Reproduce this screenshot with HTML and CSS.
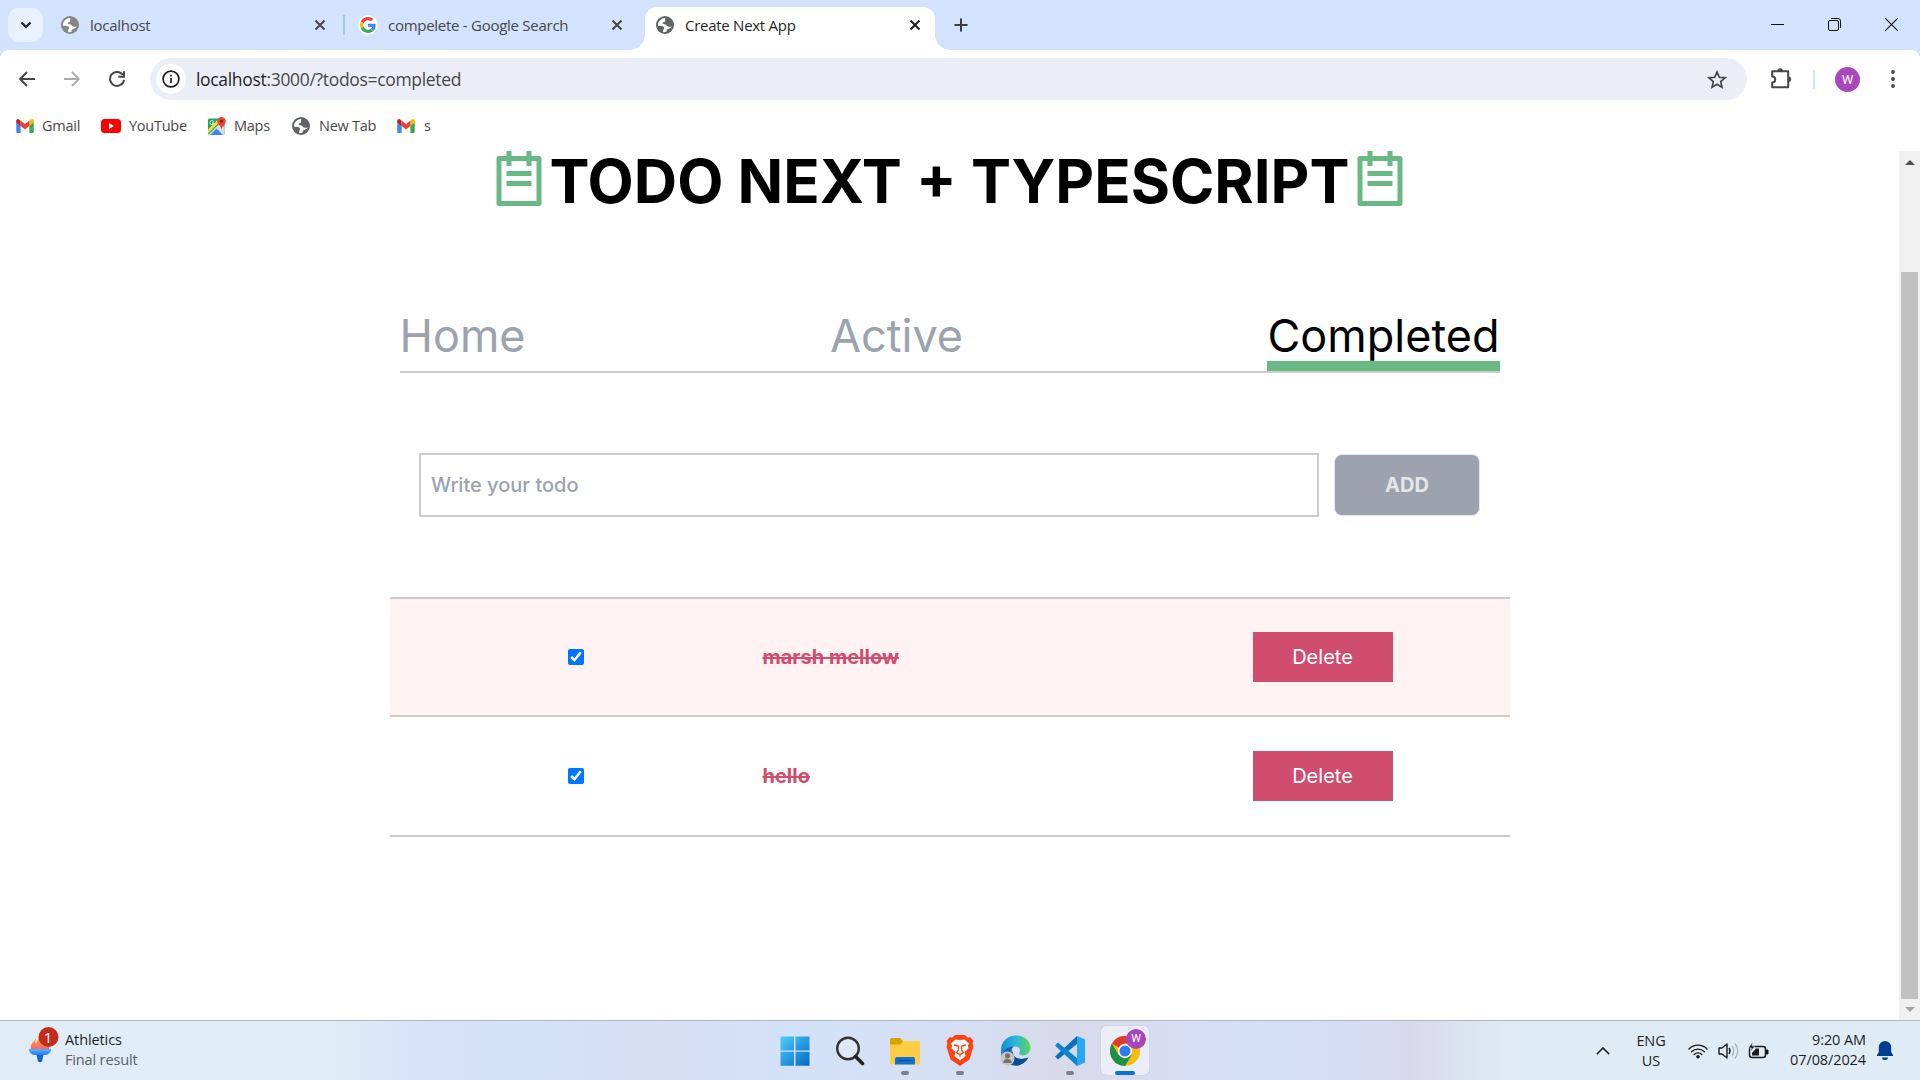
FILE: index.html
```html
<!DOCTYPE html>
<html lang="en">
<head>
<meta charset="utf-8">
<title>Create Next App</title>
<link rel="stylesheet" href="styles.css">
</head>
<body>
<svg width="0" height="0" class="defs">
  <defs>
    <symbol id="globe" viewBox="0 0 18 18"><circle cx="9" cy="9" r="9"/><path fill="#fff" d="M9.2 2c-2.6.2-5 1.4-6.4 3.8-.8 1.500-.9 2.800-.6 4.200 2-.4 3.400-.2 4.600.3 1.300.6 1.500 1.600 1.100 2.400-.4.800-1 1.300-.8 3.400 1.100.1 2.300 0 3.500-.5-.4-1.600.7-2.300 1.700-2.700 1.300-.5 3.100-1 3.600-2.700-1.100.7-2.600.8-3.900.2-1.400-.6-1.300-1.700-2.500-2C8.200 8 6.600 8.200 6.700 7.200c.1-1.100 1.700-.8 2.300-1.700.5-.8-.3-1.300 0-2.100.1-.6.5-1 .2-1.400z"/></symbol>
    <symbol id="close" viewBox="0 0 12 12"><path d="M1.500 1.500l9 9m0-9l-9 9" fill="none" stroke="currentColor" stroke-width="2"/></symbol>
    <symbol id="gmail" viewBox="0 0 20 16"><path fill="#4285f4" d="M0 2v12.500C0 15.300.7 16 1.500 16H5V6z"/><path fill="#34a853" d="M15 6v10h3.500c.8 0 1.500-.7 1.500-1.500V2z"/><path fill="#fbbc04" d="M15 2v6l5-4V2.300C20 .3 17.800-.7 16.300.8z"/><path fill="#c5221f" d="M0 2.300V4l5 4V2L3.700.8C2.200-.7 0 .3 0 2.300z"/><path fill="#ea4335" d="M5 8V1.700l5 4 5-4V8l-5 4z"/></symbol>
    <symbol id="todo" viewBox="0 0 24 24"><path d="M17 2h3a1 1 0 0 1 1 1v18a1 1 0 0 1-1 1H4a1 1 0 0 1-1-1V3a1 1 0 0 1 1-1h3V0h2v2h6V0h2v2zm0 2v2h-2V4H9v2H7V4H5v16h14V4h-2zM7 8h10v2H7V8zm0 4h10v2H7v-2z"/></symbol>
  </defs>
</svg>

<header class="tabstrip">
  <button class="tab-search"><svg width="12" height="8" viewBox="0 0 12 8"><path d="M1.500 1.500L6 6l4.500-4.500" fill="none" stroke="#1f1f1f" stroke-width="2.200"/></svg></button>
  <div class="tab tab-first"><svg class="fav gray" width="18" height="18"><use href="#globe"/></svg><span>localhost</span><svg class="x" width="12" height="12"><use href="#close"/></svg></div>
  <i class="tab-divider"></i>
  <div class="tab tab-second"><b class="g-disc"><svg width="16" height="16" viewBox="0 0 48 48"><path fill="#EA4335" d="M24 9.500c3.540 0 6.710 1.220 9.210 3.600l6.850-6.850C35.900 2.380 30.470 0 24 0 14.620 0 6.510 5.380 2.560 13.220l7.980 6.190C12.430 13.720 17.740 9.500 24 9.500z"/><path fill="#4285F4" d="M46.980 24.550c0-1.570-.15-3.090-.38-4.550H24v9.020h12.940c-.58 2.960-2.260 5.480-4.780 7.180l7.730 6c4.510-4.180 7.090-10.360 7.090-17.650z"/><path fill="#FBBC05" d="M10.530 28.590a14.500 14.500 0 0 1 0-9.180l-7.980-6.190a24 24 0 0 0 0 21.560z"/><path fill="#34A853" d="M24 48c6.480 0 11.930-2.130 15.890-5.810l-7.730-6c-2.150 1.450-4.920 2.300-8.160 2.300-6.260 0-11.570-4.220-13.470-9.910l-7.980 6.190C6.510 42.620 14.620 48 24 48z"/></svg></b><span>compelete - Google Search</span><svg class="x" width="12" height="12"><use href="#close"/></svg></div>
  <div class="tab tab-active"><svg class="fav" width="18" height="18"><use href="#globe"/></svg><span>Create Next App</span><svg class="x" width="12" height="12"><use href="#close"/></svg></div>
  <button class="new-tab"><svg width="14" height="14" viewBox="0 0 14 14"><path d="M7 .5v13M.5 7h13" stroke="#3c3c3c" stroke-width="2"/></svg></button>
  <div class="window-controls">
    <svg width="13" height="13" viewBox="0 0 13 13"><path d="M0 6.500h13" stroke="#111"/></svg>
    <svg width="13" height="13" viewBox="0 0 13 13"><rect x=".5" y="2.500" width="10" height="10" rx="1.500" fill="none" stroke="#111"/><path d="M3 .5h7a2.500 2.500 0 0 1 2.500 2.500v7" fill="none" stroke="#111"/></svg>
    <svg width="13" height="13" viewBox="0 0 13 13"><path d="M.2.200l12.600 12.600m0-12.600L.2 12.800" stroke="#111" stroke-width="1.100"/></svg>
  </div>
</header>

<nav class="toolbar">
  <div class="nav-buttons">
    <svg width="16" height="16" viewBox="0 0 16 16"><path d="M16 8H1.500M8 1L1.200 8 8 15" fill="none" stroke="#474747" stroke-width="2"/></svg>
    <svg width="16" height="16" viewBox="0 0 16 16"><path d="M0 8h14.500M8 1l6.800 7L8 15" fill="none" stroke="#aaa" stroke-width="1.800"/></svg>
    <svg width="16" height="16" viewBox="0 0 16 16"><path d="M13.800 3.900A7 7 0 1 0 15 8.800M15 .3v5.500H9.300" fill="none" stroke="#474747" stroke-width="2"/></svg>
  </div>
  <div class="omnibox">
    <b class="site-info"><svg width="18" height="18" viewBox="0 0 18 18"><circle cx="9" cy="9" r="7.900" fill="none" stroke="#1f1f1f" stroke-width="1.700"/><path d="M9 8v5M9 4.700v1.800" stroke="#1f1f1f" stroke-width="1.700"/></svg></b>
    <span class="url"><em>localhost</em>:3000/?todos=completed</span>
    <svg class="star" width="20" height="19" viewBox="0 0 20 19"><path d="M10 2l2.300 5.300 5.700.5-4.300 3.800 1.300 5.600-5-3-5 3 1.300-5.600L2 7.800l5.700-.5z" fill="none" stroke="#474747" stroke-width="1.700"/></svg>
  </div>
  <svg class="puzzle" width="22" height="22" viewBox="0 0 22 22"><path d="M2.200 3.200h16v16h-16v-4.600a3 3 0 0 0 0-6z" fill="none" stroke="#474747" stroke-width="2" stroke-linejoin="round"/><path d="M7.500 3a2.700 2.700 0 0 1 5.400 0zM18.500 8.500a2.700 2.700 0 0 1 0 5.400z" fill="#474747"/></svg>
  <i class="toolbar-divider"></i>
  <b class="avatar">W</b>
  <svg class="kebab" width="4" height="18" viewBox="0 0 4 18"><g fill="#474747"><circle cx="2" cy="2" r="1.900"/><circle cx="2" cy="9" r="1.900"/><circle cx="2" cy="16" r="1.900"/></g></svg>
</nav>

<div class="bookmarks">
  <a class="bm bm-gmail"><svg width="18" height="14"><use href="#gmail"/></svg><span>Gmail</span></a>
  <a class="bm bm-youtube"><svg width="20" height="14" viewBox="0 0 20 14"><rect width="20" height="14" rx="3.500" fill="#f00"/><path d="M8 4l5 3-5 3z" fill="#fff"/></svg><span>YouTube</span></a>
  <a class="bm bm-maps"><svg width="18" height="18" viewBox="0 0 18 18"><clipPath id="mapclip"><rect y="1.500" width="16.500" height="16.500" rx="1.500"/></clipPath><g clip-path="url(#mapclip)"><path d="M0 0h18v18H0z" fill="#1fa463"/><path d="M0 18L12 6l6 6v6z" fill="#dcdcdc"/><path d="M2 18l6.500-6.500L15 18z" fill="#4285f4"/><path d="M-1 15.500L12 2.500" stroke="#fdd835" stroke-width="3"/></g><path d="M13.500.0a4.300 4.300 0 0 1 4.300 4.300c0 3-3.300 4.200-4.300 8-1-3.800-4.300-5-4.300-8A4.300 4.300 0 0 1 13.500 0z" fill="#ea4335"/><circle cx="13.500" cy="4.300" r="1.500" fill="#7b231e"/><path d="M5.600 4.500a2 2 0 1 0 .3 1.500H4" fill="none" stroke="#fff" stroke-width=".9"/></svg><span>Maps</span></a>
  <a class="bm bm-new"><svg class="fav" width="18" height="18"><use href="#globe"/></svg><span>New Tab</span></a>
  <a class="bm bm-s"><svg width="18" height="14"><use href="#gmail"/></svg><span>s</span></a>
</div>

<div class="viewport">
  <main class="page">
    <h1 class="title"><svg width="60" height="60"><use href="#todo"/></svg><span>TODO NEXT + TYPESCRIPT</span><svg width="60" height="60"><use href="#todo"/></svg></h1>
    <nav class="filters"><a>Home</a><a>Active</a><a class="current">Completed</a></nav>
    <form class="add-form"><input class="todo-input" type="text" placeholder="Write your todo"><button class="add" type="button">ADD</button></form>
    <ul class="todos">
      <li class="todo tinted"><input type="checkbox" checked><s>marsh mellow</s><button class="delete">Delete</button></li>
      <li class="todo"><input type="checkbox" checked><s>hello</s><button class="delete">Delete</button></li>
    </ul>
  </main>
  <aside class="scrollbar">
    <svg width="10" height="5" viewBox="0 0 10 5"><path d="M0 5l5-5 5 5z" fill="#505050"/></svg>
    <i class="thumb"></i>
    <svg width="10" height="5" viewBox="0 0 10 5"><path d="M0 0l5 5 5-5z" fill="#a3a3a3"/></svg>
  </aside>
</div>

<footer class="taskbar">
  <div class="widget">
    <svg width="31" height="38" viewBox="0 0 31 38"><defs><linearGradient id="fl" x1="0" y1="0" x2="0" y2="1"><stop offset="0" stop-color="#fbb80f"/><stop offset=".6" stop-color="#ff8a3d"/><stop offset="1" stop-color="#fb5b79"/></linearGradient><linearGradient id="cup" x1="0" y1="0" x2="0" y2="1"><stop offset="0" stop-color="#52b5fb"/><stop offset="1" stop-color="#2a7cea"/></linearGradient></defs><path d="M10 7c-1 4-3 5-5 8-3 3-4 6-3 9h18V10L11 7c0 6-3 7-4 11-1-2-1-3 0-5z" fill="url(#fl)"/><path d="M0 23h22c0 4-3 6-7 6H7c-4 0-7-2-7-6z" fill="url(#cup)"/><path d="M7.500 29h7l-1.500 6.500q-2 1.500-4 0z" fill="#1664d9"/><circle cx="19.500" cy="11" r="10" fill="#c42b1c"/></svg>
    <b class="badge">1</b>
    <p><span>Athletics</span><small>Final result</small></p>
  </div>
  <div class="apps">
    <span class="app"><svg width="30" height="30" viewBox="0 0 30 30"><defs><linearGradient id="win" x1="0" y1="0" x2="1" y2="1"><stop offset="0" stop-color="#4fcdfd"/><stop offset="1" stop-color="#0568c6"/></linearGradient></defs><path d="M1 .5h13v14H.5V1zM15.500.500h14v14h-14zM.5 15.700h13.500v14H.5zM15.500 15.700h14v14h-14z" fill="url(#win)"/></svg></span>
    <span class="app"><svg width="30" height="30" viewBox="0 0 30 30"><circle cx="13" cy="12.500" r="10.800" fill="#e6ecfa" fill-opacity=".6" stroke="#333" stroke-width="2.400"/><path d="M20.500 20.500l7 7" stroke="#222" stroke-width="3.600" stroke-linecap="round"/></svg></span>
    <span class="app open"><svg width="30" height="30" viewBox="0 0 30 30"><path d="M0 3.500Q0 2 1.500 2H10l3 3v5H0z" fill="#dca100"/><path d="M0 8.500h10.500l3-3.500H28.500Q30 5 30 6.500V27q0 1.500-1.500 1.500h-27Q0 28.500 0 27z" fill="#ffcd43"/><path d="M5 28.500V23q0-2 2-2h16q2 0 2 2v5.500z" fill="#0c72ce"/><path d="M8.500 24.500h13" stroke="#064a91"/></svg></span>
    <span class="app open"><svg width="28" height="31" viewBox="0 0 28 31"><path d="M9 0h10l2.500 2.500 3-.2L27.500 6l-1 2.500 1 3-4 13L14 31l-9.500-6.500-4-13 1-3L.5 6l3-3.700 3 .2z" fill="#fb4412"/><path d="M14 5l4.500-.6L23 8.500l-1 2 .5 3-4 3.500 1 4L14 25.500 8.500 21l1-4-4-3.500.5-3-1-2 4.500-4.100z" fill="#fff"/><path d="M8 10l4.500 1M20 10l-4.500 1M12.500 11v4l-2 2.500 3.500 2 3.500-2-2-2.500v-4M14 19v3" fill="none" stroke="#fb4412" stroke-width="1.300"/></svg></span>
    <span class="app"><svg width="31" height="31" viewBox="0 0 31 31"><defs><linearGradient id="eg"><stop offset="0" stop-color="#168bd2"/><stop offset=".5" stop-color="#29b9dc"/><stop offset="1" stop-color="#62d64f"/></linearGradient></defs><path d="M1 15C1 6 8 .5 16 .5c9 0 14.500 6 14.500 12 0 5-4 8-8 8-3 0-4-1.500-3-3 1.500-3-.5-6-4.500-6C8 11.500 3 16 1 20z" fill="url(#eg)"/><path d="M1 20c3-6 7-8.500 13-8.500-3 2-3 5-1 8 3 5 9 5.500 15.500 3C25 28 20 31 15 30.500 8 30 2 26 1 20z" fill="#1464b4"/><path d="M13 16c-1 7 6 10 15.500 6.500C25 28 20 31 15 30.500 10 27 9 21 13 16z" fill="#0c4e96"/><circle cx="7.500" cy="23.500" r="7" fill="#c8c6c4"/><circle cx="7.500" cy="20.800" r="2.600" fill="#73716f"/><path d="M3.300 28q0-4 4.200-4t4.200 4z" fill="#73716f"/></svg></span>
    <span class="app open"><svg width="30" height="30" viewBox="0 0 30 30"><path d="M22 0L30 3.500v23L22 30z" fill="#25a7f2"/><path d="M22 0v8L3 23.500 0 20.500z" fill="#0a72bd"/><path d="M0 9.500L3 6.500 22 22v8z" fill="#0d84d0"/></svg></span>
    <span class="app selected"><svg width="30" height="30" viewBox="0 0 30 30"><circle cx="15" cy="15" r="15" fill="#fbbc04"/><path d="M15 15L2 7.500A15 15 0 0 1 28 7.500H15z" fill="#e33b2e"/><path d="M2 7.500A15 15 0 0 0 15 30l7-11.500L15 15 8.500 18.800z" fill="#1e9148"/><circle cx="15" cy="15" r="7.200" fill="#fff"/><circle cx="15" cy="15" r="5.500" fill="#2f7bed"/></svg><b class="profile">W</b></span>
  </div>
  <div class="tray">
    <svg class="chev" width="14" height="8" viewBox="0 0 14 8"><path d="M.8 7.200L7 1l6.200 6.200" fill="none" stroke="#1a1a1a" stroke-width="1.600"/></svg>
    <p class="lang">ENG<br>US</p>
    <svg class="wifi" width="20" height="16" viewBox="0 0 20 16"><g fill="none" stroke="#1a1a1a" stroke-width="1.400" stroke-linecap="round"><path d="M1 6a12.500 12.500 0 0 1 18 0"/><path d="M3.600 8.800a9 9 0 0 1 12.800 0"/><path d="M6.200 11.400a5.400 5.400 0 0 1 7.600 0"/></g><circle cx="10" cy="13.700" r="1.800" fill="#1a1a1a"/></svg>
    <svg class="vol" width="21" height="18" viewBox="0 0 21 18"><g fill="none" stroke="#1a1a1a" stroke-width="1.400" stroke-linejoin="round"><path d="M1 6h3l5-4v14l-5-4H1z"/><path d="M11 6q2 3 0 6" /></g><path d="M14 3.800q3.500 5.200 0 10.400M17 1.500q5.500 7.500 0 15" fill="none" stroke="#a9b3bb" stroke-width="1.300"/></svg>
    <svg class="bat" width="21" height="17" viewBox="0 0 21 17"><rect x="1.500" y="4.500" width="16" height="11" rx="2.500" fill="none" stroke="#1a1a1a" stroke-width="1.500"/><path d="M18.500 8H20v4h-1.500z" stroke="#1a1a1a"/><path d="M4 13.500V11l4-4.500h3v7z" fill="#1a1a1a"/><path d="M4.500.0L.5 6h3L2 10l5-6H4z" fill="#1a1a1a" stroke="#e0ebf6" stroke-width=".5"/></svg>
    <p class="clock">9:20 AM<br>07/08/2024</p>
    <svg class="bell" width="16" height="19" viewBox="0 0 16 19"><path d="M8 0a6.200 6.200 0 0 1 6.200 6.200V11l1.800 3v1H0v-1l1.800-3V6.200A6.200 6.200 0 0 1 8 0zM5 16.500h6a3 2.500 0 0 1-6 0z" fill="#003e92"/></svg>
  </div>
</footer>
</body>
</html>
```

FILE: styles.css
```css
* { box-sizing: border-box; }
body {
  margin: 0;
  width: 1920px;
  height: 1080px;
  overflow: hidden;
  display: flex;
  flex-direction: column;
  background: #fff;
  font-family: "Open Sans", "Noto Sans", sans-serif;
  color: #1f1f1f;
}
.defs { position: absolute; }
svg { display: block; flex: none; }
button { border: 0; padding: 0; margin: 0; font: inherit; }
p { margin: 0; }
i, b, em { font-style: normal; font-weight: 400; flex: none; }

/* Tab strip */
.tabstrip {
  height: 50px;
  flex: none;
  display: flex;
  align-items: center;
  padding-left: 8px;
  background: #d3e2fd;
  font-size: 15px;
  letter-spacing: -0.27px;
}
.tab-search {
  width: 35px;
  height: 34px;
  border-radius: 11px;
  background: #e9f0fe;
  display: grid;
  place-items: center;
}
.tab { display: flex; align-items: center; color: #474747; white-space: nowrap; }
.tab .x { margin-left: auto; color: #474747; }
.fav { fill: #5f6368; }
.fav.gray { fill: #868686; }
.tab-first { width: 265px; margin-left: 18px; gap: 11px; }
.tab-divider { width: 2px; height: 20px; margin-left: 17px; background: #a8c7fa; }
.tab-second { width: 265px; margin-left: 13px; gap: 10px; }
.g-disc { width: 20px; height: 20px; border-radius: 50%; background: #fff; display: grid; place-items: center; }
.tab-active {
  position: relative;
  align-self: flex-end;
  width: 290px;
  height: 43px;
  margin-left: 22px;
  padding: 0 14px 7px 11px;
  gap: 11px;
  border-radius: 12px 12px 0 0;
  background: #fff;
  color: #1f1f1f;
}
.tab-active .x { color: #1f1f1f; }
.tab-active::before, .tab-active::after {
  content: "";
  position: absolute;
  bottom: 0;
  width: 15px;
  height: 15px;
}
.tab-active::before { left: -15px; background: radial-gradient(circle at 0 0, transparent 14.500px, #fff 15px); }
.tab-active::after { right: -15px; background: radial-gradient(circle at 100% 0, transparent 14.500px, #fff 15px); }
.new-tab { margin-left: 19px; background: none; }
.window-controls { display: flex; gap: 44px; margin-left: auto; padding: 0 22px 1px 0; }

/* Toolbar */
.toolbar {
  height: 58px;
  flex: none;
  display: flex;
  align-items: center;
  background: radial-gradient(circle at 10px 10px, #fff 10px, #d3e2fd 10.500px) 0 0 / 10px 10px no-repeat,
    radial-gradient(circle at 0 10px, #fff 10px, #d3e2fd 10.500px) 100% 0 / 10px 10px no-repeat, #fff;
}
.nav-buttons { display: flex; gap: 29px; padding-left: 19px; width: 150px; }
.omnibox {
  width: 1597px;
  height: 42px;
  border-radius: 21px;
  background: #ebeef7;
  display: flex;
  align-items: center;
  padding: 0 20px 0 6px;
}
.site-info { width: 30px; height: 30px; border-radius: 50%; background: #fff; display: grid; place-items: center; }
.url { margin-left: 10px; font-size: 17.500px; letter-spacing: -0.32px; color: #474747; }
.url em { color: #1f1f1f; }
.star { margin-left: auto; }
.puzzle { margin-left: 23px; }
.toolbar-divider { width: 2px; height: 19px; margin-left: 21px; background: #d3e2fd; }
.avatar {
  width: 25px;
  height: 25px;
  margin-left: 20px;
  border-radius: 50%;
  background: #ab47bc;
  color: #fff;
  font: 13px/25px Roboto, sans-serif;
  text-align: center;
}
.kebab { margin-left: 31px; }

/* Bookmarks */
.bookmarks {
  height: 43px;
  flex: none;
  display: grid;
  grid-template-columns: 85px 107px 84px 105px 60px;
  padding: 0 0 8px 16px;
  font-size: 14.500px;
  letter-spacing: -0.25px;
  color: #474747;
}
.bm { display: flex; align-items: center; gap: 8px; white-space: nowrap; }
.bm span { padding-bottom: 1px; }
.bm-new, .bm-s { gap: 9px; }

/* Web page */
.viewport { height: 869px; flex: none; display: flex; font-family: Inter, sans-serif; }
.page { flex: 1; display: flex; flex-direction: column; align-items: center; }
.title {
  display: flex;
  margin: 0;
  height: 60px;
  font-size: 60px;
  line-height: 60px;
  font-weight: 700;
  color: #000;
  white-space: nowrap;
}
.title svg { fill: #68b984; }
.filters {
  width: 1100px;
  margin-top: 99px;
  display: flex;
  justify-content: space-between;
  border-bottom: 2px solid #ccc;
  font-size: 45px;
  line-height: 50px;
  color: #9ca3af;
}
.filters a { height: 61px; padding-top: 1px; }
.filters .current { color: #000; border-bottom: 10px solid #68b984; }
.add-form { width: 1061px; margin-top: 80px; display: flex; align-items: center; gap: 15px; }
.todo-input {
  width: 900px;
  height: 64px;
  border: 2px solid #ccc;
  padding: 0 10px;
  font: 500 20px Inter, sans-serif;
}
.todo-input::placeholder { color: #9ca3af; opacity: 1; }
.add {
  width: 146px;
  height: 62px;
  border: 1px solid #e5e7eb;
  border-radius: 8px;
  background: #9ca3af;
  color: #e5e7eb;
  font-size: 20px;
  font-weight: 700;
}
.todos { width: 1120px; margin: 80px 0 0; padding: 0; list-style: none; border-top: 2px solid #ccc; }
.todo {
  height: 118px;
  display: grid;
  grid-template-columns: 373px 490px 140px;
  align-items: center;
  border-bottom: 2px solid #ccc;
}
.todo + .todo { height: 120px; }
.tinted { background: #fef2f2; }
.todo input { width: 16px; height: 16px; margin: 0 0 1px 178px; accent-color: #0075ff; }
.todo s { font-size: 20px; font-weight: 700; color: #d04d6f; }
.delete { height: 50px; background: #d04d6f; color: #fff; font-size: 20px; }
.scrollbar {
  width: 21px;
  background: #f1f1f1;
  display: flex;
  flex-direction: column;
  align-items: center;
  padding: 9px 0 8px;
}
.thumb { width: 17px; height: 727px; margin: 107px 0 auto; background: #c1c1c1; }

/* Taskbar */
.taskbar {
  height: 60px;
  flex: none;
  border-top: 1px solid #b0b8c4;
  background: linear-gradient(90deg, #e0ecf6 0, #e0ecf6 330px, #d5e2f9 430px, #d4e2f9 540px, #d8dff2 660px, #d3e2f8 790px, #d6dff4 960px, #d8daea 1060px, #d8dcf0 1160px, #d4e0f8 1260px, #d7daed 1410px, #e0ecf5 1520px);
  display: grid;
  grid-template-columns: 771px 396px 1fr;
  font-size: 14.500px;
  line-height: 20px;
  letter-spacing: -0.1px;
}
.widget { position: relative; display: flex; gap: 5px; padding: 5px 0 0 29px; }
.widget p { padding-top: 4px; }
.widget span, .widget small { display: block; font-size: 14.500px; }
.widget small { color: #5c6166; letter-spacing: -0.15px; }
.badge { position: absolute; left: 38px; top: 6px; width: 20px; text-align: center; color: #fff; font-size: 15px; line-height: 20px; }
.apps { display: flex; gap: 7px; padding-top: 5px; }
.app { position: relative; width: 48px; height: 49px; flex: none; display: grid; place-items: center; }
.open::after, .selected::after {
  content: "";
  position: absolute;
  left: 20px;
  bottom: 0;
  width: 8px;
  height: 4px;
  border-radius: 2px;
  background: #7b808a;
}
.selected { background: #ebeef8; border-radius: 5px; box-shadow: 0 0 1px #aab; }
.selected::after { left: 14px; width: 20px; background: #0873d2; }
.profile {
  position: absolute;
  right: 3px;
  top: 3px;
  width: 20px;
  height: 20px;
  border-radius: 50%;
  background: #a746b8;
  color: #fff;
  font: 11px/20px Roboto, sans-serif;
  text-align: center;
}
.tray { display: flex; align-items: center; justify-content: flex-end; padding-right: 27px; }
.lang { width: 40px; margin-left: 21px; text-align: center; }
.wifi { margin-left: 17px; }
.vol { margin-left: 10px; }
.bat { margin-left: 9px; }
.clock { width: 90px; margin-left: 7px; padding-bottom: 2px; text-align: right; }
.bell { margin-left: 11px; }
```
